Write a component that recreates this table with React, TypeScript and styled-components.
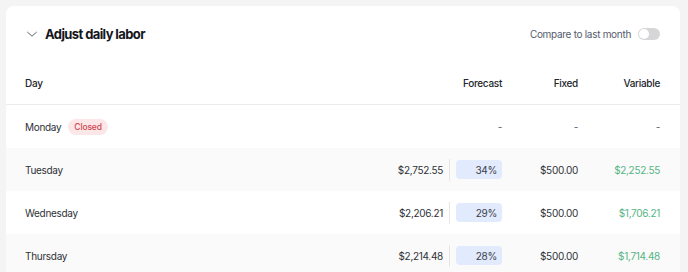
import styled, { createGlobalStyle } from "styled-components";

const GlobalStyle = createGlobalStyle`
  body {
    margin: 0;
    background: #f4f4f4;
    font-family: Inter, "Noto Sans", sans-serif;
    color: #1d1f24;
  }
`;

const Page = styled.div`
  padding: 6px 8px 0 6px;
  height: 272px;
  box-sizing: border-box;
  overflow: hidden;
`;

const Card = styled.div`
  background: #fff;
  border-radius: 8px 8px 0 0;
  overflow: hidden;
`;

const TitleBar = styled.div`
  display: flex;
  align-items: center;
  justify-content: space-between;
  height: 55px;
  padding: 1px 20px 0 20px;
  box-sizing: border-box;
`;

const TitleGroup = styled.div`
  display: flex;
  align-items: center;
  gap: 7px;
`;

const Title = styled.h2`
  margin: 0;
  font-size: 13px;
  font-weight: 700;
  letter-spacing: -0.6px;
  color: #14161b;
`;

const CompareGroup = styled.label`
  display: flex;
  align-items: center;
  gap: 7px;
  font-size: 10px;
  letter-spacing: -0.3px;
  color: #555b6b;
`;

const Toggle = styled.span`
  position: relative;
  width: 22px;
  height: 12px;
  border-radius: 6px;
  background: #d6d6d8;
  &::after {
    content: "";
    position: absolute;
    left: 1px;
    top: 1px;
    width: 10px;
    height: 10px;
    border-radius: 50%;
    background: #fff;
  }
`;

const Row = styled.div<{ $shade?: boolean; $head?: boolean }>`
  display: grid;
  grid-template-columns: 1fr auto 76px 82px;
  align-items: center;
  height: 43px;
  padding: 0 20px 0 19px;
  background: ${(p) => (p.$shade ? "#fafafa" : "#fff")};
  border-bottom: ${(p) => (p.$head ? "1px solid #ebebeb" : "none")};
  font-size: 10px;
  letter-spacing: -0.3px;
  font-weight: ${(p) => (p.$head ? 500 : 400)};
  color: ${(p) => (p.$head ? "#23262c" : "#2e3137")};
`;

const DayCell = styled.div`
  display: flex;
  align-items: center;
  gap: 7px;
`;

const Num = styled.div<{ $tone?: "green" | "muted" }>`
  text-align: right;
  color: ${(p) =>
    p.$tone === "green" ? "#56b484" : p.$tone === "muted" ? "#5c5f66" : "inherit"};
`;

const ForecastCell = styled.div`
  display: flex;
  align-items: center;
  justify-content: flex-end;
`;

const Amount = styled.span`
  padding-right: 6px;
  border-right: 1px solid #e6e6e6;
  line-height: 22px;
`;

const Pct = styled.span`
  margin-left: 6px;
  width: 46px;
  height: 19px;
  box-sizing: border-box;
  padding-right: 5px;
  display: flex;
  align-items: center;
  justify-content: flex-end;
  border-radius: 4px;
  background: #e2eafd;
  color: #3b3f48;
`;

const Badge = styled.span`
  display: inline-flex;
  align-items: center;
  height: 16px;
  padding: 0 6px;
  border-radius: 8px;
  background: #fbe6e8;
  color: #cf4652;
  font-size: 8.5px;
  letter-spacing: -0.15px;
  font-weight: 500;
`;

const Chevron = () => (
  <svg width="12" height="8" viewBox="0 0 12 8" fill="none">
    <path d="M1.5 2.2 L6 6.2 L10.5 2.2" stroke="#62656d" strokeWidth="1" strokeLinecap="round" strokeLinejoin="round" />
  </svg>
);

const days = [
  { day: "Tuesday", amount: "$2,752.55", pct: "34%", fixed: "$500.00", variable: "$2,252.55" },
  { day: "Wednesday", amount: "$2,206.21", pct: "29%", fixed: "$500.00", variable: "$1,706.21" },
  { day: "Thursday", amount: "$2,214.48", pct: "28%", fixed: "$500.00", variable: "$1,714.48" },
];

export default function App() {
  return (
    <>
      <GlobalStyle />
      <Page>
        <Card>
          <TitleBar>
            <TitleGroup>
              <Chevron />
              <Title>Adjust daily labor</Title>
            </TitleGroup>
            <CompareGroup>
              Compare to last month
              <Toggle />
            </CompareGroup>
          </TitleBar>
          <Row $head>
            <div>Day</div>
            <Num>Forecast</Num>
            <Num>Fixed</Num>
            <Num>Variable</Num>
          </Row>
          <Row>
            <DayCell>
              Monday <Badge>Closed</Badge>
            </DayCell>
            <Num $tone="muted">-</Num>
            <Num $tone="muted">-</Num>
            <Num $tone="muted">-</Num>
          </Row>
          {days.map((d, i) => (
            <Row key={d.day} $shade={i % 2 === 0}>
              <div>{d.day}</div>
              <ForecastCell>
                <Amount>{d.amount}</Amount>
                <Pct>{d.pct}</Pct>
              </ForecastCell>
              <Num>{d.fixed}</Num>
              <Num $tone="green">{d.variable}</Num>
            </Row>
          ))}
        </Card>
      </Page>
    </>
  );
}
